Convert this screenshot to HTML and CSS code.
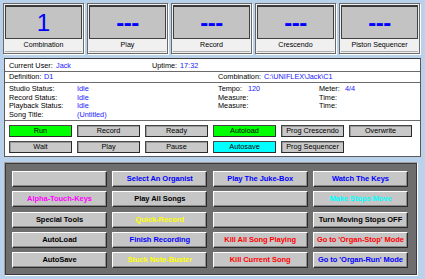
FILE: index.html
```html
<!DOCTYPE html>
<html>
<head>
<meta charset="utf-8">
<link rel="stylesheet" href="styles.css">
</head>
<body>
<div class="tiles">
  <div class="tile"><div class="disp">1</div><div class="cap">Combination</div></div>
  <div class="tile"><div class="disp dash">---</div><div class="cap">Play</div></div>
  <div class="tile"><div class="disp dash">---</div><div class="cap">Record</div></div>
  <div class="tile"><div class="disp dash">---</div><div class="cap">Crescendo</div></div>
  <div class="tile"><div class="disp dash">---</div><div class="cap">Piston Sequencer</div></div>
</div>

<div class="info">
  <div class="row row-a">
    <span>Current User:</span><span class="v">Jack</span><span>Uptime:</span><span class="v">17:32</span>
  </div>
  <div class="row row-b">
    <span>Definition:</span><span class="v">D1</span><span>Combination:</span><span class="v">C:\UNIFLEX\Jack\C1</span>
  </div>
  <div class="row status">
    <span>Studio Status:</span><span class="v">Idle</span><span>Tempo:</span><span class="v">120</span><span>Meter:</span><span class="v">4/4</span>
    <span>Record Status:</span><span class="v">Idle</span><span>Measure:</span><span></span><span>Time:</span><span></span>
    <span>Playback Status:</span><span class="v">Idle</span><span>Measure:</span><span></span><span>Time:</span><span></span>
    <span>Song Title:</span><span class="v">(Untitled)</span><span></span><span></span><span></span><span></span>
  </div>
  <div class="row btns">
    <div class="sb green">Run</div>
    <div class="sb">Record</div>
    <div class="sb">Ready</div>
    <div class="sb green">Autoload</div>
    <div class="sb">Prog Crescendo</div>
    <div class="sb">Overwrite</div>
    <div class="sb">Wait</div>
    <div class="sb">Play</div>
    <div class="sb">Pause</div>
    <div class="sb cyan">Autosave</div>
    <div class="sb">Prog Sequencer</div>
  </div>
</div>

<div class="panel">
  <div class="bb"></div>
  <div class="bb blue">Select An Organist</div>
  <div class="bb blue">Play The Juke-Box</div>
  <div class="bb blue">Watch The Keys</div>

  <div class="bb magenta">Alpha-Touch-Keys</div>
  <div class="bb">Play All Songs</div>
  <div class="bb"></div>
  <div class="bb cyantext">Make Stops Move</div>

  <div class="bb">Special Tools</div>
  <div class="bb yellow">Quick-Record</div>
  <div class="bb"></div>
  <div class="bb">Turn Moving Stops OFF</div>

  <div class="bb">AutoLoad</div>
  <div class="bb blue">Finish Recording</div>
  <div class="bb red">Kill All Song Playing</div>
  <div class="bb red">Go to 'Organ-Stop' Mode</div>

  <div class="bb">AutoSave</div>
  <div class="bb yellow">Stuck Note-Buster</div>
  <div class="bb red">Kill Current Song</div>
  <div class="bb blue">Go to 'Organ-Run' Mode</div>
</div>
</body>
</html>
```
FILE: styles.css
```css
html, body {
  margin: 0;
  padding: 0;
}
body {
  width: 425px;
  height: 279px;
  overflow: hidden;
  background: #b9d1ea;
  font-family: "Liberation Sans", Arial, sans-serif;
  font-size: 7.1px;
  color: #000;
  padding-top: 3px;
  box-sizing: border-box;
}

/* top tiles */
.tiles {
  display: flex;
  gap: 3px;
  padding-left: 3px;
}
.tile {
  width: 81px;
  box-sizing: border-box;
  border: 1px solid #6a6a6a;
  background: #f0f0f0;
  padding: 1px;
  box-shadow: 1px 1px 0 #fff;
}
.disp {
  height: 34px;
  box-sizing: border-box;
  border: 1px solid #404040;
  border-top: 2px solid #3a3a3a;
  background: #c3c3c3;
  color: #0000ff;
  font-size: 24px;
  line-height: 31px;
  text-align: center;
}
.disp.dash {
  font-weight: bold;
  letter-spacing: -0.5px;
}
.cap {
  height: 12px;
  line-height: 12px;
  text-align: center;
  border-bottom: 1px solid #b0b0b0;
}

/* info panel */
.info {
  margin: 4px 0 0 4px;
  width: 417px;
  box-sizing: border-box;
  background: #fff;
  border: 1px solid #5a5a5a;
  border-top-color: #3c3c3c;
}
.row {
  border-bottom: 1px solid #6a6a6a;
  padding-left: 4px;
}
.v {
  color: #1a1aff;
}
.row-a {
  display: grid;
  grid-template-columns: 47px 96px 28px auto;
  height: 12px;
  line-height: 13px;
  font-size: 7.3px;
}
.row-b {
  display: grid;
  grid-template-columns: 35px 174px 46px auto;
  height: 10px;
  line-height: 10px;
  font-size: 7.3px;
}
.status {
  display: grid;
  grid-template-columns: 68px 141px 30px 71px 26px auto;
  grid-auto-rows: 8.5px;
  line-height: 8.5px;
  padding-top: 2px;
  padding-bottom: 1px;
  font-size: 7.3px;
}
.btns {
  display: grid;
  grid-template-columns: repeat(6, 63px);
  grid-auto-rows: 12px;
  column-gap: 5px;
  row-gap: 4px;
  padding: 4px 0 3px 4px;
  border-bottom: none;
}
.sb {
  box-sizing: border-box;
  border: 1px solid #474747;
  border-right-color: #2a2a2a;
  border-bottom-color: #2a2a2a;
  background: #c8c8c8;
  box-shadow: inset 1px 1px 0 #9a9a9a;
  text-align: center;
  line-height: 10px;
  font-size: 7.3px;
}
.sb.green {
  background: #00ff00;
  box-shadow: none;
}
.sb.cyan {
  background: #00ffff;
  box-shadow: none;
}

/* bottom panel */
.panel {
  margin: 5px 0 0 4px;
  width: 414px;
  height: 114px;
  box-sizing: border-box;
  background: #6e6e6e;
  border: 1px solid #a0a0a0;
  border-right-color: #fff;
  border-bottom-color: #fff;
  box-shadow: inset 1px 1px 0 #3a3a3a, inset -1px -1px 0 #3a3a3a;
  padding: 8px 8px 7px 7px;
  display: grid;
  grid-template-columns: repeat(4, 95px);
  grid-template-rows: repeat(5, 16px);
  column-gap: 5.33px;
  row-gap: 4.25px;
}
.bb {
  box-sizing: border-box;
  background: #c6c6c6;
  border-top: 1px solid #fff;
  border-left: 1px solid #fff;
  border-right: 1px solid #2a2a2a;
  border-bottom: 1px solid #2a2a2a;
  box-shadow: inset -1px -1px 0 #8a8a8a;
  font-weight: bold;
  font-size: 7.5px;
  letter-spacing: -0.05px;
  line-height: 14px;
  text-align: center;
  white-space: nowrap;
  overflow: hidden;
  color: #000;
}
.bb.blue { color: #0000ff; }
.bb.magenta { color: #ff00ff; }
.bb.cyantext { color: #00ffff; }
.bb.yellow { color: #ffff00; }
.bb.red { color: #ff0000; }
```
